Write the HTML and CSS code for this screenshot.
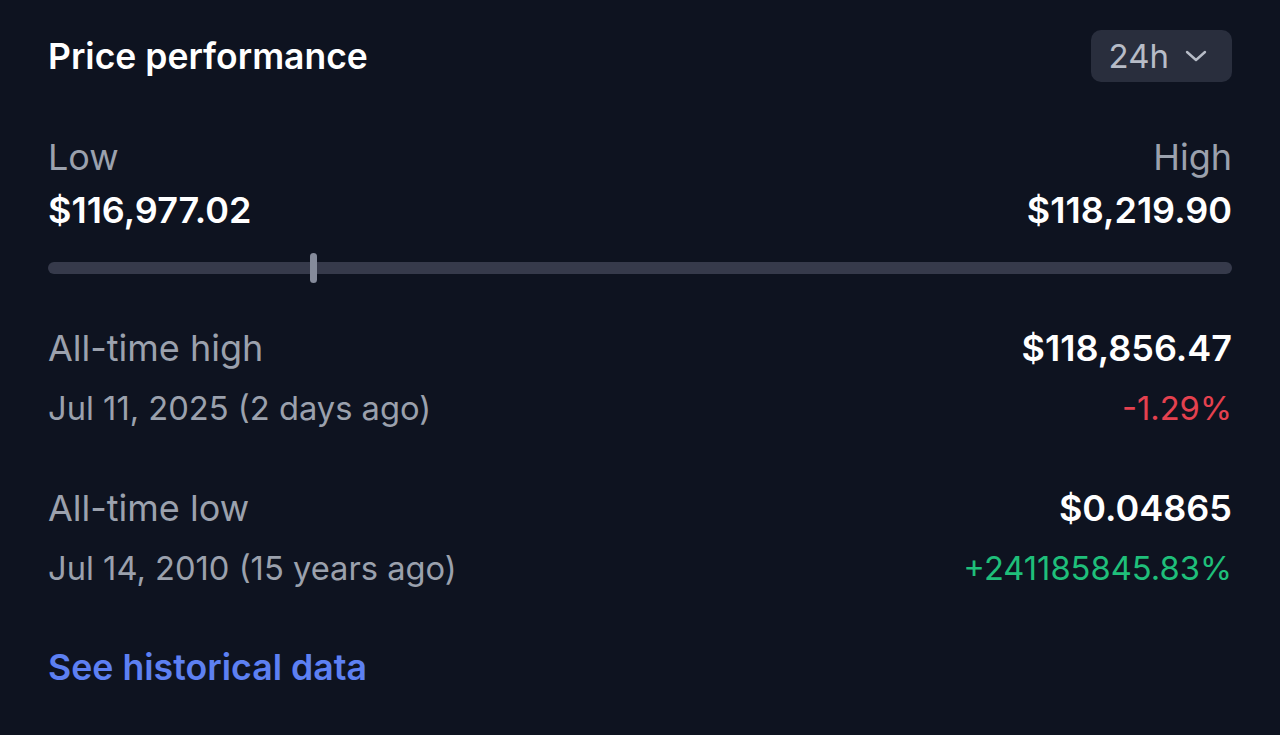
FILE: index.html
```html
<!DOCTYPE html>
<html lang="en">
<head>
    <meta charset="UTF-8">
    <meta name="viewport" content="width=device-width, initial-scale=1.0">
    <title>Price performance</title>
    <link rel="stylesheet" href="styles.css">
</head>
<body>
    <div class="panel">
        <div class="panel-head">
            <h2>Price performance</h2>
            <button class="range-btn" type="button">
                24h
                <svg width="22" height="12" viewBox="0 0 22 12" fill="none" stroke="currentColor" stroke-width="2.4" stroke-linecap="round" stroke-linejoin="round"><path d="M2 2l9 8 9-8"/></svg>
            </button>
        </div>

        <div class="range">
            <div class="range-col">
                <span class="label">Low</span>
                <span class="value">$116,977.02</span>
            </div>
            <div class="range-col right">
                <span class="label">High</span>
                <span class="value">$118,219.90</span>
            </div>
        </div>

        <div class="track">
            <div class="thumb" style="left: 22.4%"></div>
        </div>

        <div class="stat">
            <div class="stat-row">
                <span class="label">All-time high</span>
                <span class="value">$118,856.47</span>
            </div>
            <div class="stat-row sub">
                <span class="date">Jul 11, 2025 (2 days ago)</span>
                <span class="down">-1.29%</span>
            </div>
        </div>

        <div class="stat">
            <div class="stat-row">
                <span class="label">All-time low</span>
                <span class="value">$0.04865</span>
            </div>
            <div class="stat-row sub">
                <span class="date">Jul 14, 2010 (15 years ago)</span>
                <span class="up">+241185845.83%</span>
            </div>
        </div>

        <a class="history-link" href="#">See historical data</a>
    </div>
</body>
</html>
```

FILE: styles.css
```css
/* Page */
body {
    margin: 0;
    background-color: #0e1320;
    font-family: Inter, "Noto Sans", sans-serif;
    color: #ffffff;
}

.panel {
    padding: 28px 48px 0 48px;
}

/* Header */
.panel-head {
    display: flex;
    justify-content: space-between;
    align-items: center;
    height: 56px;
}

.panel-head h2 {
    margin: 0;
    font-size: 35.5px;
    font-weight: 600;
}

.range-btn {
    display: flex;
    align-items: center;
    gap: 16px;
    height: 52px;
    padding: 0 25px 0 18px;
    border: none;
    border-radius: 10px;
    background-color: #292e3d;
    color: #b7bcc7;
    font-family: inherit;
    font-size: 33px;
    cursor: pointer;
}

/* Low / high */
.range {
    display: flex;
    justify-content: space-between;
    margin-top: 51px;
}

.range-col {
    display: flex;
    flex-direction: column;
    gap: 9px;
}

.range-col.right {
    align-items: flex-end;
}

.label {
    font-size: 36px;
    color: #9ba1ad;
    line-height: 44px;
}

.value {
    font-size: 36px;
    font-weight: 600;
    line-height: 44px;
}

.track {
    position: relative;
    height: 12px;
    margin-top: 30px;
    border-radius: 6px;
    background-color: #363a4b;
}

.thumb {
    position: absolute;
    top: -9px;
    width: 7px;
    height: 30px;
    margin-left: -3px;
    border-radius: 4px;
    background-color: #858b9b;
}

/* All-time stats */
.stat {
    margin-top: 52px;
}

.stat + .stat {
    margin-top: 56px;
}

.stat-row {
    display: flex;
    justify-content: space-between;
    align-items: center;
    height: 44px;
}

.stat-row.sub {
    margin-top: 16px;
    font-size: 32.7px;
}

.date {
    color: #9ba1ad;
}

.down {
    color: #e5414f;
}

.up {
    color: #1fbf7a;
}

.history-link {
    display: inline-block;
    margin-top: 55px;
    font-size: 35.7px;
    line-height: 44px;
    font-weight: 600;
    color: #5d80f2;
    text-decoration: none;
}
```
